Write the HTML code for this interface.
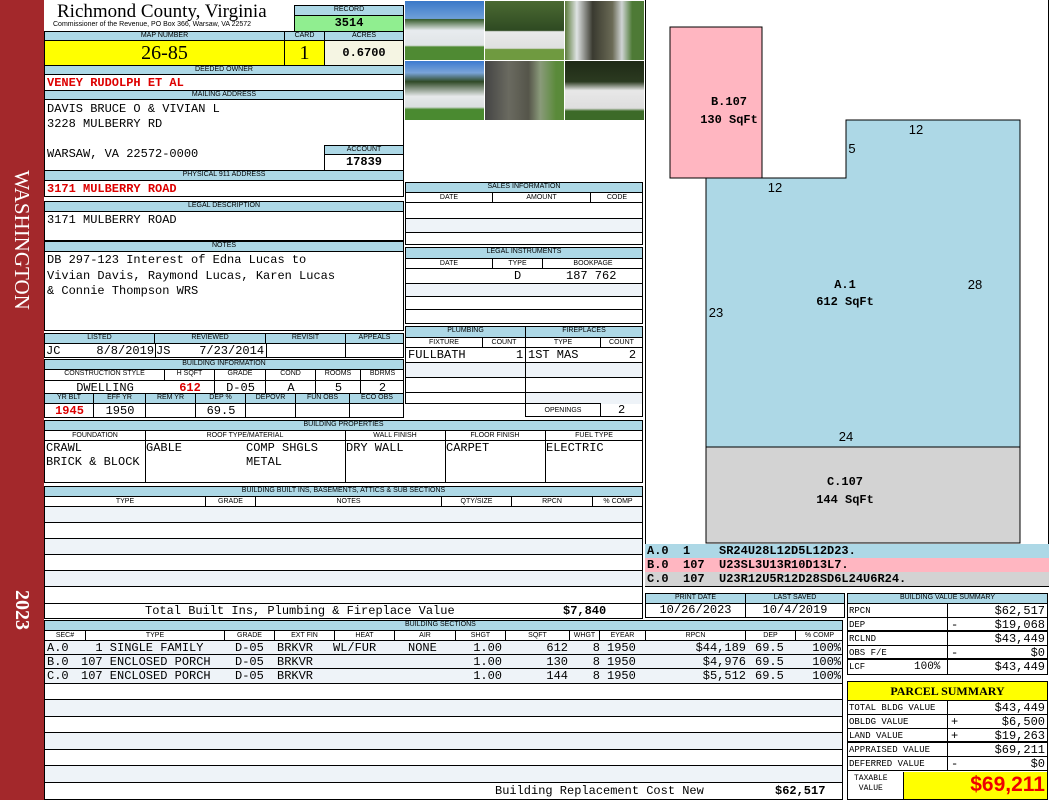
<!DOCTYPE html>
<html><head><meta charset="utf-8"><style>
*{box-sizing:border-box;margin:0;padding:0}
body{width:1050px;height:800px;position:relative;background:#fff;overflow:hidden;font-family:"Liberation Mono",monospace;font-size:12px;color:#000}
div{position:absolute}
.h{background:#add8e6;border:1px solid #000;font:7px "Liberation Sans",sans-serif;text-align:center;line-height:8px;white-space:nowrap;overflow:hidden}
.b{border:1px solid #000}
.c{border-right:1px solid #000;top:0;bottom:0}
.t{white-space:pre;line-height:14px}
.r{color:#d00;font-weight:bold}
.alt{background:#eef3f8}
.ln{border-bottom:1px solid #000;left:0;right:0}
.ph{overflow:hidden}
.rt{text-align:right;white-space:pre;line-height:14px}
</style></head><body>
<!-- sidebar -->
<div style="left:0;top:0;width:44px;height:800px;background:#a3282b"></div>
<div style="left:22px;top:240px;width:0;height:0"><div style="left:-90px;top:-12px;width:180px;height:24px;transform:rotate(90deg);color:#fff;font:21px 'Liberation Serif',serif;text-align:center;line-height:24px">WASHINGTON</div></div>
<div style="left:22px;top:610px;width:0;height:0"><div style="left:-30px;top:-12px;width:60px;height:24px;transform:rotate(90deg);color:#fff;font:bold 20px 'Liberation Serif',serif;text-align:center;line-height:24px">2023</div></div>

<!-- title -->
<div style="left:57px;top:1px;font:19px 'Liberation Serif',serif;white-space:nowrap">Richmond County, Virginia</div>
<div style="left:53px;top:21px;font:7px 'Liberation Sans',sans-serif;white-space:nowrap">Commissioner of the Revenue, PO Box 366, Warsaw, VA 22572</div>
<div class="h" style="left:294px;top:5px;width:110px;height:11px">RECORD</div>
<div class="b" style="left:294px;top:15px;width:110px;height:17px;background:#90ee90;text-align:center;font-weight:bold;line-height:15px;font-size:12px">3514</div>

<div class="h" style="left:44px;top:31px;width:241px;height:10px">MAP NUMBER</div>
<div class="h" style="left:284px;top:31px;width:41px;height:10px">CARD</div>
<div class="h" style="left:324px;top:31px;width:80px;height:10px">ACRES</div>
<div class="b" style="left:44px;top:40px;width:241px;height:26px;background:#ffff00;font:20px 'Liberation Serif',serif;text-align:center;line-height:24px">26-85</div>
<div class="b" style="left:284px;top:40px;width:41px;height:26px;background:#ffff00;font:20px 'Liberation Serif',serif;text-align:center;line-height:24px">1</div>
<div class="b" style="left:324px;top:40px;width:80px;height:26px;background:#f5f5e3;text-align:center;font-weight:bold;line-height:24px">0.6700</div>

<div class="h" style="left:44px;top:65px;width:360px;height:10px">DEEDED OWNER</div>
<div class="b t r" style="left:44px;top:74px;width:360px;height:17px;padding-left:2px;line-height:16px">VENEY RUDOLPH ET AL</div>
<div class="h" style="left:44px;top:90px;width:360px;height:10px">MAILING ADDRESS</div>
<div class="b t" style="left:44px;top:99px;width:360px;height:72px;padding:2px 0 0 2px;line-height:15px">DAVIS BRUCE O &amp; VIVIAN L
3228 MULBERRY RD

WARSAW, VA 22572-0000</div>
<div class="h" style="left:324px;top:145px;width:80px;height:10px">ACCOUNT</div>
<div class="b" style="left:324px;top:154px;width:80px;height:17px;text-align:center;font-weight:bold;line-height:15px">17839</div>
<div class="h" style="left:44px;top:170px;width:360px;height:11px">PHYSICAL 911 ADDRESS</div>
<div class="b t r" style="left:44px;top:180px;width:360px;height:17px;padding-left:2px;line-height:16px">3171 MULBERRY ROAD</div>

<div class="h" style="left:44px;top:201px;width:360px;height:11px">LEGAL DESCRIPTION</div>
<div class="b t" style="left:44px;top:211px;width:360px;height:30px;padding:1px 0 0 2px">3171 MULBERRY ROAD</div>
<div class="h" style="left:44px;top:241px;width:360px;height:11px">NOTES</div>
<div class="b t" style="left:44px;top:251px;width:360px;height:80px;padding:1px 0 0 2px;line-height:15.5px">DB 297-123 Interest of Edna Lucas to
Vivian Davis, Raymond Lucas, Karen Lucas
&amp; Connie Thompson WRS</div>

<!-- listed -->
<div class="h" style="left:44px;top:333px;width:111px;height:11px">LISTED</div>
<div class="h" style="left:154px;top:333px;width:112px;height:11px">REVIEWED</div>
<div class="h" style="left:265px;top:333px;width:81px;height:11px">REVISIT</div>
<div class="h" style="left:345px;top:333px;width:59px;height:11px">APPEALS</div>
<div class="b" style="left:44px;top:343px;width:360px;height:15px">
<div class="c" style="left:110px"></div><div class="c" style="left:221px"></div><div class="c" style="left:300px"></div>
<div class="t" style="left:1px;top:0">JC     8/8/2019</div><div class="t" style="left:111px;top:0">JS    7/23/2014</div></div>

<!-- building info -->
<div class="h" style="left:44px;top:359px;width:360px;height:11px">BUILDING INFORMATION</div>
<div class="b" style="left:44px;top:369px;width:360px;height:49px;font:7px 'Liberation Sans',sans-serif">
<div class="ln" style="top:10px"></div><div class="ln" style="top:23px;background:#add8e6;height:11px;border-top:1px solid #000"></div>
<div style="left:0;top:0;width:120px;height:10px;border-right:1px solid #000;text-align:center">CONSTRUCTION STYLE</div>
<div style="left:120px;top:0;width:50px;height:24px;border-right:1px solid #000;text-align:center">H SQFT</div>
<div style="left:170px;top:0;width:51px;height:24px;border-right:1px solid #000;text-align:center">GRADE</div>
<div style="left:221px;top:0;width:50px;height:24px;border-right:1px solid #000;text-align:center">COND</div>
<div style="left:271px;top:0;width:45px;height:24px;border-right:1px solid #000;text-align:center">ROOMS</div>
<div style="left:316px;top:0;width:43px;text-align:center">BDRMS</div>
<div style="left:0;top:11px;width:120px;font:12px 'Liberation Mono',monospace;text-align:center">DWELLING</div>
<div class="r" style="left:120px;top:11px;width:50px;font:bold 12px 'Liberation Mono',monospace;text-align:center;color:#d00">612</div>
<div style="left:170px;top:11px;width:51px;font:12px 'Liberation Mono',monospace;text-align:center">D-05</div>
<div style="left:221px;top:11px;width:50px;font:12px 'Liberation Mono',monospace;text-align:center">A</div>
<div style="left:271px;top:11px;width:45px;font:12px 'Liberation Mono',monospace;text-align:center">5</div>
<div style="left:316px;top:11px;width:43px;font:12px 'Liberation Mono',monospace;text-align:center">2</div>
<div style="left:0;top:24px;width:49px;height:24px;border-right:1px solid #000;text-align:center">YR BLT</div>
<div style="left:49px;top:24px;width:52px;height:24px;border-right:1px solid #000;text-align:center">EFF YR</div>
<div style="left:101px;top:24px;width:50px;height:24px;border-right:1px solid #000;text-align:center">REM YR</div>
<div style="left:151px;top:24px;width:50px;height:24px;border-right:1px solid #000;text-align:center">DEP %</div>
<div style="left:201px;top:24px;width:50px;height:24px;border-right:1px solid #000;text-align:center">DEPOVR</div>
<div style="left:251px;top:24px;width:54px;height:24px;border-right:1px solid #000;text-align:center">FUN OBS</div>
<div style="left:305px;top:24px;width:54px;text-align:center">ECO OBS</div>
<div style="left:0;top:34px;width:49px;font:bold 12px 'Liberation Mono',monospace;text-align:center;color:#d00">1945</div>
<div style="left:49px;top:34px;width:52px;font:12px 'Liberation Mono',monospace;text-align:center">1950</div>
<div style="left:151px;top:34px;width:50px;font:12px 'Liberation Mono',monospace;text-align:center">69.5</div>
</div>

<!-- building properties -->
<div class="h" style="left:44px;top:420px;width:599px;height:11px">BUILDING PROPERTIES</div>
<div class="b" style="left:44px;top:430px;width:599px;height:53px">
<div class="ln" style="top:0;height:10px"></div>
<div class="c" style="left:100px"></div><div class="c" style="left:300px"></div><div class="c" style="left:400px"></div><div class="c" style="left:500px"></div>
<div style="left:0;top:0;width:100px;font:7px 'Liberation Sans',sans-serif;text-align:center;line-height:9px">FOUNDATION</div>
<div style="left:100px;top:0;width:200px;font:7px 'Liberation Sans',sans-serif;text-align:center;line-height:9px">ROOF TYPE/MATERIAL</div>
<div style="left:300px;top:0;width:100px;font:7px 'Liberation Sans',sans-serif;text-align:center;line-height:9px">WALL FINISH</div>
<div style="left:400px;top:0;width:100px;font:7px 'Liberation Sans',sans-serif;text-align:center;line-height:9px">FLOOR FINISH</div>
<div style="left:500px;top:0;width:98px;font:7px 'Liberation Sans',sans-serif;text-align:center;line-height:9px">FUEL TYPE</div>
<div class="t" style="left:1px;top:10px">CRAWL
BRICK &amp; BLOCK</div>
<div class="t" style="left:101px;top:10px">GABLE</div>
<div class="t" style="left:201px;top:10px">COMP SHGLS
METAL</div>
<div class="t" style="left:301px;top:10px">DRY WALL</div>
<div class="t" style="left:401px;top:10px">CARPET</div>
<div class="t" style="left:501px;top:10px">ELECTRIC</div>
</div>

<!-- built ins -->
<div class="h" style="left:44px;top:486px;width:599px;height:11px">BUILDING BUILT INS, BASEMENTS, ATTICS &amp; SUB SECTIONS</div>
<div class="b" style="left:44px;top:496px;width:599px;height:123px">
<div class="ln" style="top:0;height:10px"></div>
<div style="left:0;top:0;width:161px;height:10px;border-right:1px solid #000;font:7px 'Liberation Sans',sans-serif;text-align:center;line-height:9px">TYPE</div>
<div style="left:161px;top:0;width:50px;height:10px;border-right:1px solid #000;font:7px 'Liberation Sans',sans-serif;text-align:center;line-height:9px">GRADE</div>
<div style="left:211px;top:0;width:186px;height:10px;border-right:1px solid #000;font:7px 'Liberation Sans',sans-serif;text-align:center;line-height:9px">NOTES</div>
<div style="left:397px;top:0;width:70px;height:10px;border-right:1px solid #000;font:7px 'Liberation Sans',sans-serif;text-align:center;line-height:9px">QTY/SIZE</div>
<div style="left:467px;top:0;width:81px;height:10px;border-right:1px solid #000;font:7px 'Liberation Sans',sans-serif;text-align:center;line-height:9px">RPCN</div>
<div style="left:548px;top:0;width:50px;height:10px;font:7px 'Liberation Sans',sans-serif;text-align:center;line-height:9px">% COMP</div>
<div class="ln alt" style="top:10px;height:16px"></div><div class="ln" style="top:26px;height:16px"></div><div class="ln alt" style="top:42px;height:16px"></div><div class="ln" style="top:58px;height:16px"></div><div class="ln alt" style="top:74px;height:16px"></div><div class="ln" style="top:90px;height:17px"></div>
<div class="t" style="left:100px;top:107px">Total Built Ins, Plumbing &amp; Fireplace Value</div>
<div class="t" style="left:518px;top:107px;font-weight:bold">$7,840</div>
</div>

<!-- building sections -->
<div class="h" style="left:44px;top:620px;width:799px;height:11px;text-align:left;padding-left:360px">BUILDING SECTIONS</div>
<div class="b" style="left:44px;top:630px;width:799px;height:170px">
<div class="ln" style="top:0;height:10px"></div>
<div style="left:0;top:0;width:800px;height:10px;font:7px 'Liberation Sans',sans-serif;line-height:9px">
<div style="left:0;width:41px;height:10px;border-right:1px solid #000;text-align:center">SEC#</div>
<div style="left:41px;width:139px;height:10px;border-right:1px solid #000;text-align:center">TYPE</div>
<div style="left:180px;width:50px;height:10px;border-right:1px solid #000;text-align:center">GRADE</div>
<div style="left:230px;width:60px;height:10px;border-right:1px solid #000;text-align:center">EXT FIN</div>
<div style="left:290px;width:60px;height:10px;border-right:1px solid #000;text-align:center">HEAT</div>
<div style="left:350px;width:61px;height:10px;border-right:1px solid #000;text-align:center">AIR</div>
<div style="left:411px;width:50px;height:10px;border-right:1px solid #000;text-align:center">SHGT</div>
<div style="left:461px;width:64px;height:10px;border-right:1px solid #000;text-align:center">SQFT</div>
<div style="left:525px;width:30px;height:10px;border-right:1px solid #000;text-align:center">WHGT</div>
<div style="left:555px;width:46px;height:10px;border-right:1px solid #000;text-align:center">EYEAR</div>
<div style="left:601px;width:100px;height:10px;border-right:1px solid #000;text-align:center">RPCN</div>
<div style="left:701px;width:50px;height:10px;border-right:1px solid #000;text-align:center">DEP</div>
<div style="left:751px;width:47px;height:10px;text-align:center">% COMP</div>
</div>
<div class="ln alt" style="top:10px;height:14px"></div><div class="ln alt" style="top:24px;height:14px"></div><div class="ln alt" style="top:38px;height:15px"></div>
<div class="ln" style="top:53px;height:16px"></div><div class="ln alt" style="top:69px;height:17px"></div><div class="ln" style="top:86px;height:16px"></div><div class="ln alt" style="top:102px;height:17px"></div><div class="ln" style="top:119px;height:16px"></div><div class="ln alt" style="top:135px;height:17px"></div>
<div class="t" style="left:2px;top:10px">A.0
B.0
C.0</div>
<div class="t" style="left:36px;top:10px">  1 SINGLE FAMILY
107 ENCLOSED PORCH
107 ENCLOSED PORCH</div>
<div class="t" style="left:190px;top:10px">D-05
D-05
D-05</div>
<div class="t" style="left:232px;top:10px">BRKVR
BRKVR
BRKVR</div>
<div class="t" style="left:288px;top:10px">WL/FUR</div>
<div class="t" style="left:363px;top:10px">NONE</div>
<div class="rt" style="left:400px;top:10px;width:57px">1.00
1.00
1.00</div>
<div class="rt" style="left:470px;top:10px;width:53px">612
130
144</div>
<div class="rt" style="left:530px;top:10px;width:25px">8
8
8</div>
<div class="t" style="left:562px;top:10px">1950
1950
1950</div>
<div class="rt" style="left:610px;top:10px;width:91px">$44,189
$4,976
$5,512</div>
<div class="t" style="left:710px;top:10px">69.5
69.5
69.5</div>
<div class="rt" style="left:750px;top:10px;width:46px">100%
100%
100%</div>
<div class="t" style="left:450px;top:153px">Building Replacement Cost New</div>
<div class="t" style="left:730px;top:153px;font-weight:bold">$62,517</div>
</div>

<!-- photos -->
<div class="ph" style="left:405px;top:1px;width:79px;height:59px;background:linear-gradient(#3a78c8 0,#6fa0d8 30%,#355a2a 31%,#e8ecef 50%,#e0e4e6 75%,#4f8a33 78%)"></div>
<div class="ph" style="left:485px;top:1px;width:79px;height:59px;background:linear-gradient(#4b6a32 0,#2e4a22 50%,#e9eaea 52%,#dfe0e0 80%,#6f9a40 82%)"></div>
<div class="ph" style="left:565px;top:1px;width:79px;height:59px;background:linear-gradient(90deg,#5a7a3a 0,#dfe3e3 15%,#3a3a30 35%,#6a6a55 60%,#cfd4d4 72%,#4e7a36 85%)"></div>
<div class="ph" style="left:405px;top:61px;width:79px;height:59px;background:linear-gradient(#3c7ad0 0,#7aa4d8 20%,#2f4a26 35%,#e6e9ea 60%,#dadfe0 78%,#4a8a30 82%)"></div>
<div class="ph" style="left:485px;top:61px;width:79px;height:59px;background:linear-gradient(90deg,#444 0,#6a6a60 30%,#55554a 55%,#8a9a7a 70%,#5a8a3a 90%)"></div>
<div class="ph" style="left:565px;top:61px;width:79px;height:59px;background:linear-gradient(#1f2a16 0,#2b3a20 35%,#e8e8e8 50%,#dedede 80%,#3c6a28 85%)"></div>

<!-- sales -->
<div class="h" style="left:405px;top:182px;width:238px;height:11px">SALES INFORMATION</div>
<div class="b" style="left:405px;top:192px;width:238px;height:53px">
<div class="ln" style="top:0;height:10px"></div>
<div style="left:0;width:87px;height:10px;border-right:1px solid #000;font:7px 'Liberation Sans',sans-serif;text-align:center;line-height:9px">DATE</div>
<div style="left:87px;width:98px;height:10px;border-right:1px solid #000;font:7px 'Liberation Sans',sans-serif;text-align:center;line-height:9px">AMOUNT</div>
<div style="left:185px;width:52px;height:10px;font:7px 'Liberation Sans',sans-serif;text-align:center;line-height:9px">CODE</div>
<div class="ln" style="top:10px;height:16px"></div><div class="ln alt" style="top:26px;height:14px"></div>
</div>
<div class="h" style="left:405px;top:247px;width:238px;height:12px">LEGAL INSTRUMENTS</div>
<div class="b" style="left:405px;top:258px;width:238px;height:66px">
<div class="ln" style="top:0;height:10px"></div>
<div style="left:0;width:87px;height:10px;border-right:1px solid #000;font:7px 'Liberation Sans',sans-serif;text-align:center;line-height:9px">DATE</div>
<div style="left:87px;width:50px;height:10px;border-right:1px solid #000;font:7px 'Liberation Sans',sans-serif;text-align:center;line-height:9px">TYPE</div>
<div style="left:137px;width:100px;height:10px;font:7px 'Liberation Sans',sans-serif;text-align:center;line-height:9px">BOOKPAGE</div>
<div class="ln" style="top:10px;height:15px"></div><div class="ln alt" style="top:25px;height:13px"></div><div class="ln" style="top:38px;height:13px"></div>
<div class="t" style="left:108px;top:10px">D</div><div class="t" style="left:160px;top:10px">187 762</div>
</div>
<!-- plumbing -->
<div class="h" style="left:405px;top:326px;width:121px;height:12px">PLUMBING</div>
<div class="h" style="left:525px;top:326px;width:118px;height:12px">FIREPLACES</div>
<div class="b" style="left:405px;top:337px;width:121px;height:67px">
<div class="ln" style="top:0;height:10px"></div>
<div style="left:0;width:77px;height:10px;border-right:1px solid #000;font:7px 'Liberation Sans',sans-serif;text-align:center;line-height:9px">FIXTURE</div>
<div style="left:77px;width:42px;height:10px;font:7px 'Liberation Sans',sans-serif;text-align:center;line-height:9px">COUNT</div>
<div class="ln" style="top:10px;height:15px"></div><div class="ln alt" style="top:25px;height:15px"></div><div class="ln" style="top:40px;height:15px"></div>
<div class="t" style="left:2px;top:10px">FULLBATH       1</div>
</div>
<div class="b" style="left:525px;top:337px;width:118px;height:80px">
<div class="ln" style="top:0;height:10px"></div>
<div style="left:0;width:75px;height:10px;border-right:1px solid #000;font:7px 'Liberation Sans',sans-serif;text-align:center;line-height:9px">TYPE</div>
<div style="left:75px;width:41px;height:10px;font:7px 'Liberation Sans',sans-serif;text-align:center;line-height:9px">COUNT</div>
<div class="ln" style="top:10px;height:15px"></div><div class="ln alt" style="top:25px;height:15px"></div><div class="ln" style="top:40px;height:15px"></div><div class="ln alt" style="top:55px;height:11px;border:0"></div>
<div style="left:0;top:65px;width:75px;height:14px;border-right:1px solid #000;border-top:1px solid #000;font:7px 'Liberation Sans',sans-serif;text-align:center;line-height:13px">OPENINGS</div>
<div class="t" style="left:92px;top:65px">2</div>
<div class="t" style="left:2px;top:10px">1ST MAS       2</div>
</div>

<!-- sketch -->
<div class="b" style="left:645px;top:0;width:404px;height:545px;border-width:0 1px 1px 1px"></div>
<svg style="position:absolute;left:0;top:0" width="1050" height="800">
<rect x="670" y="27" width="92" height="151" fill="#ffb6c1" stroke="#000"/>
<polygon points="706,178 846,178 846,120 1020,120 1020,447 706,447" fill="#add8e6" stroke="#000"/>
<rect x="706" y="447" width="314" height="96" fill="#d3d3d3" stroke="#000"/>
<g font-family="Liberation Sans,sans-serif" font-size="13" fill="#000">
<text x="916" y="134" text-anchor="middle">12</text><text x="852" y="153" text-anchor="middle">5</text>
<text x="775" y="192" text-anchor="middle">12</text><text x="975" y="289" text-anchor="middle">28</text>
<text x="716" y="317" text-anchor="middle">23</text><text x="846" y="441" text-anchor="middle">24</text>
</g>
<g font-family="Liberation Mono,monospace" font-size="12" font-weight="bold" text-anchor="middle">
<text x="845" y="288">A.1</text><text x="845" y="305">612 SqFt</text>
<text x="729" y="105">B.107</text><text x="729" y="123">130 SqFt</text>
<text x="845" y="485">C.107</text><text x="845" y="503">144 SqFt</text>
</g>
</svg>
<div class="t" style="left:645px;top:544px;width:404px;height:14px;background:#add8e6;padding-left:2px;font-weight:bold;line-height:14px">A.0  1    SR24U28L12D5L12D23.</div>
<div class="t" style="left:645px;top:558px;width:404px;height:14px;background:#ffb6c1;padding-left:2px;font-weight:bold;line-height:14px">B.0  107  U23SL3U13R10D13L7.</div>
<div class="t" style="left:645px;top:572px;width:404px;height:15px;background:#d3d3d3;padding-left:2px;font-weight:bold;line-height:14px;border-bottom:1px solid #000">C.0  107  U23R12U5R12D28SD6L24U6R24.</div>

<div class="h" style="left:645px;top:593px;width:101px;height:11px">PRINT DATE</div>
<div class="h" style="left:745px;top:593px;width:100px;height:11px">LAST SAVED</div>
<div class="b" style="left:645px;top:603px;width:101px;height:15px;text-align:center;line-height:13px">10/26/2023</div>
<div class="b" style="left:745px;top:603px;width:100px;height:15px;text-align:center;line-height:13px">10/4/2019</div>

<div class="h" style="left:847px;top:593px;width:201px;height:11px">BUILDING VALUE SUMMARY</div>
<div class="b" style="left:847px;top:603px;width:201px;height:72px;font-size:12px">
<div class="c" style="left:99px"></div>
<div class="ln" style="top:0;height:14px"></div><div class="ln" style="top:14px;height:14px;border-bottom-width:2px"></div><div class="ln" style="top:28px;height:14px"></div><div class="ln" style="top:42px;height:14px;border-bottom-width:2px"></div>
<div class="t" style="left:1px;top:0;font-size:9px">RPCN</div><div class="t" style="right:2px;top:0">$62,517</div>
<div class="t" style="left:1px;top:14px;font-size:9px">DEP</div><div class="t" style="left:103px;top:14px">-</div><div class="t" style="right:2px;top:14px">$19,068</div>
<div class="t" style="left:1px;top:28px;font-size:9px">RCLND</div><div class="t" style="right:2px;top:28px">$43,449</div>
<div class="t" style="left:1px;top:42px;font-size:9px">OBS F/E</div><div class="t" style="left:103px;top:42px">-</div><div class="t" style="right:2px;top:42px">$0</div>
<div class="t" style="left:1px;top:56px;font-size:9px">LCF</div><div class="t" style="left:66px;top:56px;font-size:11px">100%</div><div class="t" style="right:2px;top:56px">$43,449</div>
</div>

<div class="b" style="left:847px;top:681px;width:201px;height:20px;background:#ffff00;text-align:center;font:bold 12px 'Liberation Serif',serif;line-height:18px">PARCEL SUMMARY</div>
<div class="b" style="left:847px;top:700px;width:201px;height:100px;font-size:12px">
<div class="c" style="left:99px;bottom:28px"></div>
<div class="ln" style="top:0;height:14px"></div><div class="ln" style="top:14px;height:14px"></div><div class="ln" style="top:28px;height:14px;border-bottom-width:2px"></div><div class="ln" style="top:42px;height:14px"></div><div class="ln" style="top:56px;height:14px"></div>
<div class="t" style="left:1px;top:0;font-size:9px">TOTAL BLDG VALUE</div><div class="t" style="right:2px;top:0">$43,449</div>
<div class="t" style="left:1px;top:14px;font-size:9px">OBLDG VALUE</div><div class="t" style="left:103px;top:14px">+</div><div class="t" style="right:2px;top:14px">$6,500</div>
<div class="t" style="left:1px;top:28px;font-size:9px">LAND VALUE</div><div class="t" style="left:103px;top:28px">+</div><div class="t" style="right:2px;top:28px">$19,263</div>
<div class="t" style="left:1px;top:42px;font-size:9px">APPRAISED VALUE</div><div class="t" style="right:2px;top:42px">$69,211</div>
<div class="t" style="left:1px;top:56px;font-size:9px">DEFERRED VALUE</div><div class="t" style="left:103px;top:56px">-</div><div class="t" style="right:2px;top:56px">$0</div>
<div class="t" style="left:6px;top:73px;font-size:8px;line-height:10px">TAXABLE
 VALUE</div>
<div style="left:55px;top:71px;right:0;bottom:0;background:#ffff00;border-left:1px solid #000;color:#e00;font:bold 21px 'Liberation Sans',sans-serif;text-align:right;padding-right:2px;line-height:26px">$69,211</div>
</div>
</body></html>
